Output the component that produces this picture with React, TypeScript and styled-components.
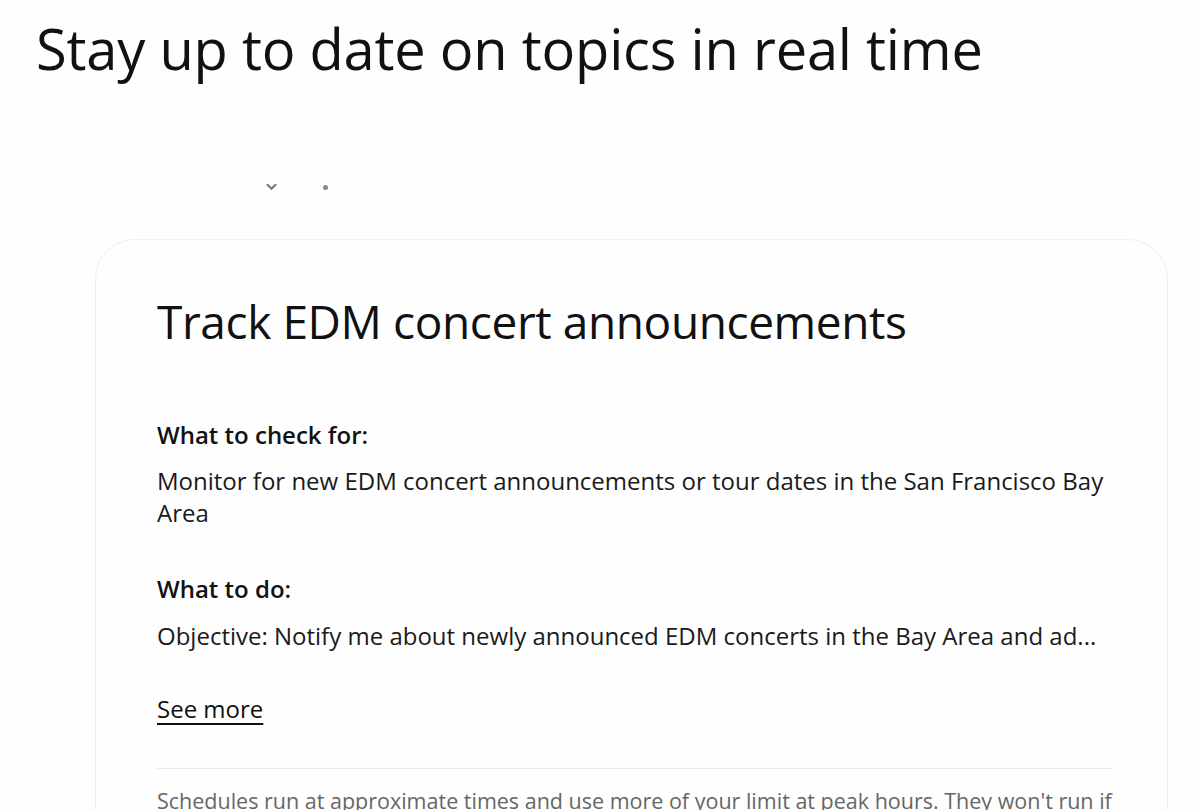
import React from "react";
import styled, { createGlobalStyle } from "styled-components";

const Global = createGlobalStyle`
  html, body { margin: 0; padding: 0; background: #ffffff; }
  body { font-family: "Open Sans", "Noto Sans", sans-serif; color: #1f1f1f; }
  * { box-sizing: border-box; }
`;

const Page = styled.div`
  width: 1200px;
  height: 810px;
  overflow: hidden;
  background: #fefefe;
  display: flex;
  flex-direction: column;
`;

const Heading = styled.h1`
  margin: 18px 0 0 36px;
  font-family: "Open Sans", sans-serif;
  font-weight: 400;
  font-size: 56px;
  line-height: 60px;
  letter-spacing: -0.2px;
  color: #111;
  white-space: nowrap;
`;

const Controls = styled.div`
  display: flex;
  align-items: center;
  gap: 46px;
  margin: 105px 0 0 266px;
  height: 12px;
`;

const Dot = styled.span`
  width: 5px;
  height: 5px;
  border-radius: 50%;
  background: #8a8a8a;
`;

const Card = styled.section`
  margin: 48px 32px 0 95px;
  border: 1px solid #efefef;
  border-bottom: none;
  border-radius: 40px 40px 0 0;
  padding: 53px 54px 0 61px;
  flex: 1;
  display: flex;
  flex-direction: column;
`;

const CardTitle = styled.h2`
  margin: 0;
  font-family: "Open Sans", sans-serif;
  font-weight: 400;
  font-size: 46px;
  line-height: 56px;
  letter-spacing: -0.4px;
  color: #111;
  white-space: nowrap;
`;

const Label = styled.h3<{ $top: number }>`
  margin: ${(p) => p.$top}px 0 0;
  font-weight: 600;
  font-size: 24px;
  line-height: 30px;
  color: #111;
`;

const Body = styled.p<{ $top: number }>`
  margin: ${(p) => p.$top}px 0 0;
  font-size: 24px;
  line-height: 32px;
  color: #1a1a1a;
`;

const SeeMore = styled.a`
  margin-top: 42px;
  align-self: flex-start;
  font-size: 24px;
  line-height: 30px;
  color: #111;
  text-decoration: underline;
  text-underline-offset: 5px;
  text-decoration-thickness: 1.5px;
`;

const Divider = styled.hr`
  margin: 44px 0 0;
  border: none;
  border-top: 1px solid #ebebeb;
  width: 100%;
`;

const Note = styled.p`
  margin: 18px 0 0;
  font-size: 21.5px;
  line-height: 28px;
  color: #666;
  white-space: nowrap;
`;

export default function App() {
  return (
    <>
      <Global />
      <Page>
        <Heading>Stay up to date on topics in real time</Heading>
        <Controls>
          <svg width="11" height="8" viewBox="0 0 11 8">
            <path d="M1.5 1.8 L5.5 5.8 L9.5 1.8" fill="none" stroke="#7a7a7a" strokeWidth="2.2" strokeLinecap="round" strokeLinejoin="round" />
          </svg>
          <Dot />
        </Controls>
        <Card>
          <CardTitle>Track EDM concert announcements</CardTitle>
          <Label $top={71}>What to check for:</Label>
          <Body $top={15}>Monitor for new EDM concert announcements or tour dates in the San Francisco Bay Area</Body>
          <Label $top={45}>What to do:</Label>
          <Body $top={16}>Objective: Notify me about newly announced EDM concerts in the Bay Area and ad...</Body>
          <SeeMore href="#">See more</SeeMore>
          <Divider />
          <Note>Schedules run at approximate times and use more of your limit at peak hours. They won't run if</Note>
        </Card>
      </Page>
    </>
  );
}
